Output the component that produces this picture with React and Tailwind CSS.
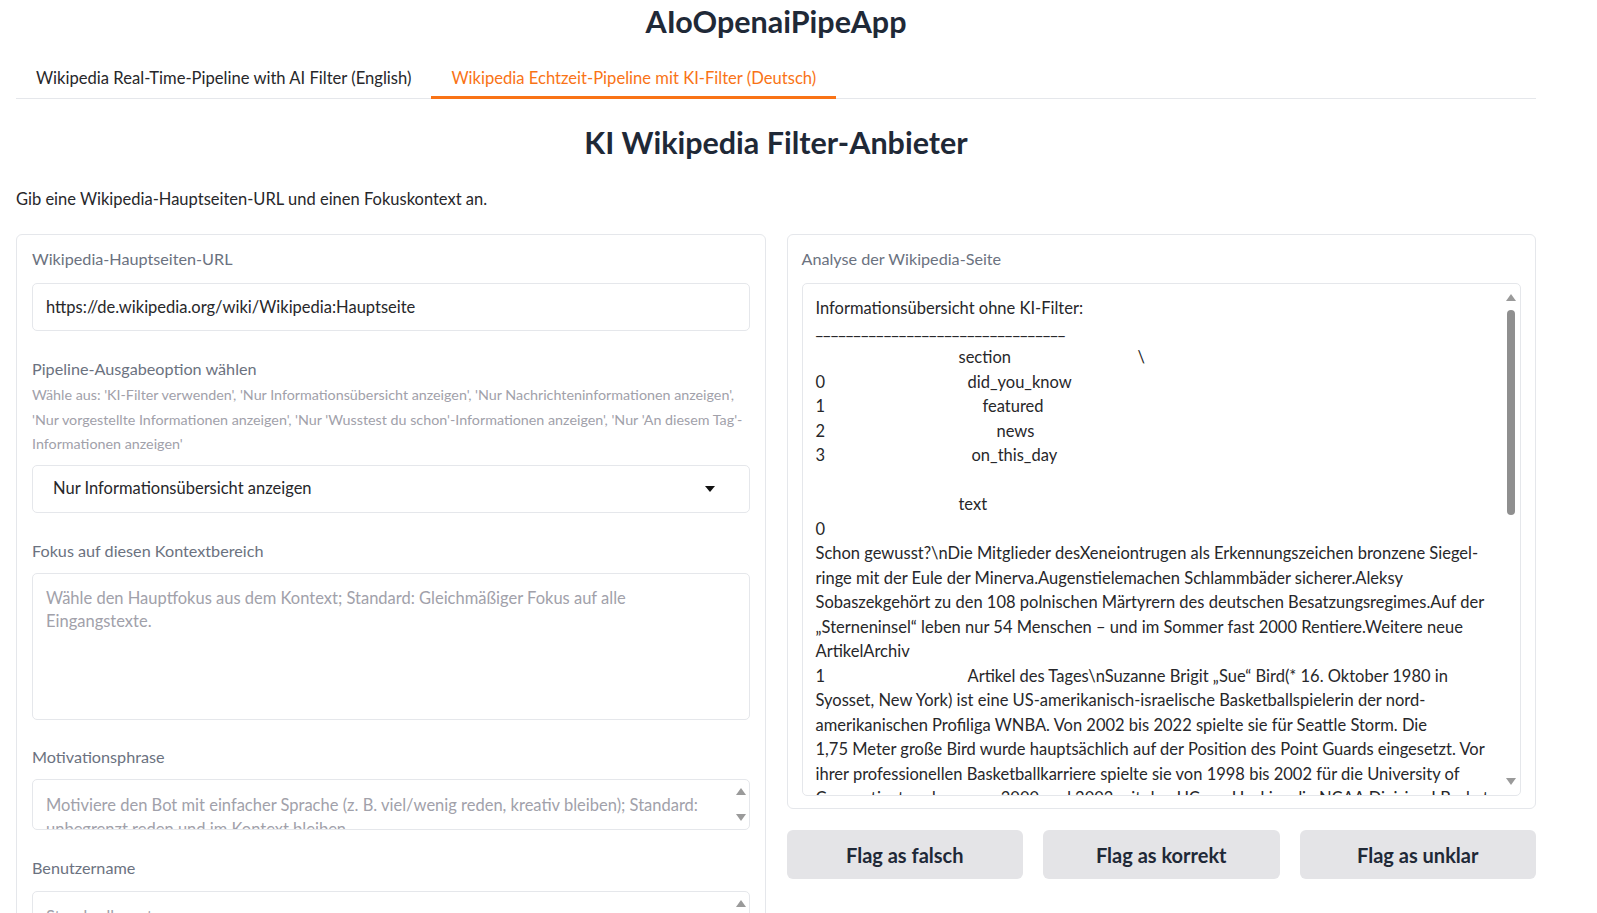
import React from 'react';

const rightLines = [
  'Schon gewusst?\\nDie Mitglieder desXeneiontrugen als Erkennungszeichen bronzene Siegel-',
  'ringe mit der Eule der Minerva.Augenstielemachen Schlammbäder sicherer.Aleksy',
  'Sobaszekgehört zu den 108 polnischen Märtyrern des deutschen Besatzungsregimes.Auf der',
  '„Sterneninsel“ leben nur 54 Menschen – und im Sommer fast 2000 Rentiere.Weitere neue',
  'ArtikelArchiv',
];

const birdLines = [
  'Syosset, New York) ist eine US-amerikanisch-israelische Basketballspielerin der nord-',
  'amerikanischen Profiliga WNBA. Von 2002 bis 2022 spielte sie für Seattle Storm. Die',
  '1,75 Meter große Bird wurde hauptsächlich auf der Position des Point Guards eingesetzt. Vor',
  'ihrer professionellen Basketballkarriere spielte sie von 1998 bis 2002 für die University of',
  'Connecticut und gewann 2000 und 2002 mit den UConn Huskies die NCAA Division I Basket-',
];

const ArrowUp = () => (
  <div className="w-0 h-0 border-l-[5px] border-r-[5px] border-b-[7px] border-l-transparent border-r-transparent border-b-[#9a9a9a]" />
);
const ArrowDown = () => (
  <div className="w-0 h-0 border-l-[5px] border-r-[5px] border-t-[7px] border-l-transparent border-r-transparent border-t-[#9a9a9a]" />
);

const Label = ({ children }) => (
  <div className="text-[16.2px] leading-[24px] text-[#6b7280]">{children}</div>
);

const App = () => {
  return (
    <div className="min-h-screen bg-white font-[Lato,sans-serif] text-[#27272a]">
      <div className="w-[1520px] ml-4">
        {/* Title */}
        <h1 className="text-center text-[30.5px] font-bold leading-[42px] text-[#1f2937]">AIoOpenaiPipeApp</h1>

        {/* Tabs */}
        <div className="flex mt-[24px] border-b border-[#e5e7eb]">
          <div className="px-[20px] pb-[8px] text-[16.6px] leading-[24px] text-[#27272a]">
            Wikipedia Real-Time-Pipeline with AI Filter (English)
          </div>
          <div className="px-[20px] pb-[6px] text-[16.6px] leading-[24px] text-[#f97316] border-b-[3px] border-[#f97316] -mb-px">
            Wikipedia Echtzeit-Pipeline mit KI-Filter (Deutsch)
          </div>
        </div>

        {/* Heading */}
        <h2 className="text-center text-[30.5px] font-bold leading-[40px] mt-[23px] text-[#1f2937]">
          KI Wikipedia Filter-Anbieter
        </h2>
        <p className="mt-[25px] text-[16.5px] leading-[24px] text-[#27272a]">
          Gib eine Wikipedia-Hauptseiten-URL und einen Fokuskontext an.
        </p>

        <div className="grid grid-cols-2 gap-[21px] mt-[23px] items-start">
          {/* Left column */}
          <div className="border border-[#e5e7eb] rounded-[6px] px-[15px] pt-[12px] pb-6">
            <Label>Wikipedia-Hauptseiten-URL</Label>
            <div className="mt-3 h-[48px] border border-[#e5e7eb] rounded-[5px] px-[13px] flex items-center text-[16.5px]">
              https://de.wikipedia.org/wiki/Wikipedia:Hauptseite
            </div>

            <div className="mt-[26px]">
              <Label>Pipeline-Ausgabeoption wählen</Label>
              <div className="mt-[2px] text-[14.3px] leading-[24.5px] text-[#a1a1aa]">
                <div>Wähle aus: 'KI-Filter verwenden', 'Nur Informationsübersicht anzeigen', 'Nur Nachrichteninformationen anzeigen',</div>
                <div>'Nur vorgestellte Informationen anzeigen', 'Nur 'Wusstest du schon'-Informationen anzeigen', 'Nur 'An diesem Tag'-</div>
                <div>Informationen anzeigen'</div>
              </div>
              <div className="mt-[8px] h-[48px] border border-[#e5e7eb] rounded-[5px] pl-[20px] pr-[34px] flex items-center justify-between text-[16.5px]">
                <span>Nur Informationsübersicht anzeigen</span>
                <div className="w-0 h-0 border-l-[5px] border-r-[5px] border-t-[6px] border-l-transparent border-r-transparent border-t-[#111]" />
              </div>
            </div>

            <div className="mt-[26px]">
              <Label>Fokus auf diesen Kontextbereich</Label>
              <div className="mt-[10px] h-[147px] border border-[#e5e7eb] rounded-[5px] px-[13px] pt-[13px] text-[16.5px] leading-[23.5px] text-[#a1a1aa]">
                <div>Wähle den Hauptfokus aus dem Kontext; Standard: Gleichmäßiger Fokus auf alle</div>
                <div>Eingangstexte.</div>
              </div>
            </div>

            <div className="mt-[25px]">
              <Label>Motivationsphrase</Label>
              <div className="mt-[10px] h-[51px] border border-[#e5e7eb] rounded-[5px] flex overflow-hidden">
                <div className="flex-1 px-[13px] pt-[13px] text-[16.5px] leading-[24px] text-[#a1a1aa] overflow-hidden">
                  <div>Motiviere den Bot mit einfacher Sprache (z. B. viel/wenig reden, kreativ bleiben); Standard:</div>
                  <div>unbegrenzt reden und im Kontext bleiben</div>
                </div>
                <div className="w-[16px] flex flex-col items-center justify-between py-[8px]">
                  <ArrowUp />
                  <ArrowDown />
                </div>
              </div>
            </div>

            <div className="mt-[26px]">
              <Label>Benutzername</Label>
              <div className="mt-[11px] h-[51px] border border-[#e5e7eb] rounded-[5px] flex overflow-hidden">
                <div className="flex-1 px-[13px] pt-[13px] text-[16.5px] leading-[24px] text-[#a1a1aa] overflow-hidden">
                  Standardbenutzer
                </div>
                <div className="w-[16px] flex flex-col items-center justify-between py-[8px]">
                  <ArrowUp />
                  <ArrowDown />
                </div>
              </div>
            </div>
          </div>

          {/* Right column */}
          <div className="flex flex-col">
            <div className="border border-[#e5e7eb] rounded-[6px] px-[14px] pt-[12px] pb-[12px]">
              <Label>Analyse der Wikipedia-Seite</Label>
              <div className="mt-3 h-[513px] border border-[#e5e7eb] rounded-[5px] flex overflow-hidden">
                <div className="flex-1 pl-[13px] pt-[12px] text-[16.5px] leading-[24.5px] text-[#27272a] overflow-hidden whitespace-nowrap">
                  <div>Informationsübersicht ohne KI-Filter:</div>
                  <div className="-mt-[4px] mb-[4px]">_________________________________</div>
                  <div className="flex"><span className="w-[143px]" /><span className="w-[179px]">section</span><span>\</span></div>
                  <div className="flex"><span className="w-[152px]">0</span><span>did_you_know</span></div>
                  <div className="flex"><span className="w-[167px]">1</span><span>featured</span></div>
                  <div className="flex"><span className="w-[181px]">2</span><span>news</span></div>
                  <div className="flex"><span className="w-[156px]">3</span><span>on_this_day</span></div>
                  <div className="h-[24.5px]" />
                  <div className="flex"><span className="w-[143px]" /><span>text</span></div>
                  <div>0</div>
                  {rightLines.map((l, i) => (
                    <div key={i}>{l}</div>
                  ))}
                  <div className="flex"><span className="w-[152px]">1</span><span>Artikel des Tages\nSuzanne Brigit „Sue“ Bird(* 16. Oktober 1980 in</span></div>
                  {birdLines.map((l, i) => (
                    <div key={i}>{l}</div>
                  ))}
                </div>
                <div className="w-[18px] flex flex-col items-center pt-[10px] pb-[10px]">
                  <ArrowUp />
                  <div className="mt-[9px] w-[8px] h-[205px] rounded-full bg-[#8f8f8f]" />
                  <div className="flex-1" />
                  <ArrowDown />
                </div>
              </div>
            </div>

            <div className="grid grid-cols-3 gap-[20px] mt-[21px]">
              {['Flag as falsch', 'Flag as korrekt', 'Flag as unklar'].map((t) => (
                <button
                  key={t}
                  className="h-[49px] rounded-[6px] bg-[#e4e4e7] text-[20px] font-bold text-[#1f2937]"
                >
                  {t}
                </button>
              ))}
            </div>
          </div>
        </div>
      </div>
    </div>
  );
};

export default App;
